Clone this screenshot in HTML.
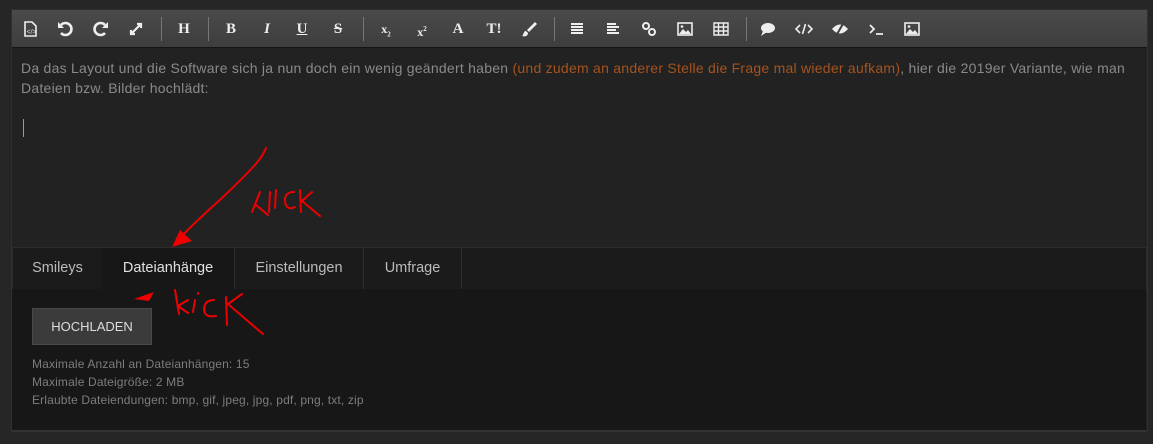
<!DOCTYPE html>
<html><head><meta charset="utf-8"><style>
body{margin:0;width:1153px;height:444px;background:#262626;font-family:"Liberation Sans",sans-serif;position:relative;overflow:hidden}
.frame{position:absolute;left:11px;top:9px;width:1135px;height:420px;background:#222;border:1px solid #303030}
.tb{position:absolute;left:0;top:0;width:1135px;height:37px;background:linear-gradient(#4a4a4a,#3e3e3e);border-bottom:1px solid #151515}
.ic{position:absolute;top:9px;width:20px;height:20px;color:#eee;font-size:15px;font-weight:bold;text-align:center;line-height:20px;font-family:"Liberation Serif",serif}
.sep{position:absolute;top:7px;width:1px;height:24px;background:#777}
.txt{position:absolute;left:9px;top:48px;font-size:14px;letter-spacing:0.25px;line-height:20px;color:#8a8a8a;width:1115px}
.or{color:#a6531d}
.tabs{position:absolute;left:0;top:237px;width:1133px;height:41px;background:#1b1b1b;border:1px solid #2c2c2c;border-bottom:1px solid #2c2c2c}
.tab{position:absolute;top:0;height:41px;line-height:41px;text-align:center;font-size:14.5px;color:#bbb;border-right:1px solid #2e2e2e}
.panel{position:absolute;left:0;top:279px;width:1134px;height:141px;background:#171717;border-bottom:2px solid #333}
.btn{position:absolute;left:20px;top:19px;width:120px;height:37px;background:#3b3b3b;border:1px solid #4a4a4a;box-sizing:border-box;color:#ddd;font-size:13px;line-height:35px;text-align:center}
.info{position:absolute;left:20px;top:66px;font-size:12px;letter-spacing:0.15px;line-height:18px;color:#7d7d7d}
</style></head><body>
<div class="frame">
<div class="tb">
<svg class="ic" style="left:8px" viewBox="0 0 20 20"><path d="M5 3h7l4 4v10H5z" fill="none" stroke="#eee" stroke-width="1.6"/><text x="6.5" y="15" font-size="7" fill="#eee">&lt;/&gt;</text></svg>
<svg class="ic" style="left:43px" viewBox="0 0 20 20"><path d="M6 6a6 6 0 1 1 0 8" fill="none" stroke="#eee" stroke-width="2.6"/><path d="M3 3v6h6z" fill="#eee"/></svg>
<svg class="ic" style="left:79px" viewBox="0 0 20 20"><path d="M14 6a6 6 0 1 0 0 8" fill="none" stroke="#eee" stroke-width="2.6"/><path d="M17 3v6h-6z" fill="#eee"/></svg>
<svg class="ic" style="left:114px" viewBox="0 0 20 20"><path d="M5 15l10-10M11 5h4v4M5 11v4h4" fill="none" stroke="#eee" stroke-width="2.2"/></svg>
<div class="sep" style="left:149px"></div>
<div class="ic" style="left:162px">H</div>
<div class="sep" style="left:196px"></div>
<div class="ic" style="left:209px">B</div>
<div class="ic" style="left:245px;font-style:italic">I</div>
<div class="ic" style="left:280px;text-decoration:underline">U</div>
<div class="ic" style="left:316px;text-decoration:line-through">S</div>
<div class="sep" style="left:351px"></div>
<div class="ic" style="left:364px;font-size:12px">x<sub style="font-size:7px">2</sub></div>
<div class="ic" style="left:400px;font-size:12px">x<sup style="font-size:7px">2</sup></div>
<div class="ic" style="left:436px">A</div>
<div class="ic" style="left:472px">T!</div>
<svg class="ic" style="left:507px" viewBox="0 0 20 20"><path d="M16 3l2 2-8 8-2-2z M7 12l2 2c0 3-3 4-6 3 2-1 1-5 4-5z" fill="#eee"/></svg>
<div class="sep" style="left:542px"></div>
<svg class="ic" style="left:555px" viewBox="0 0 20 20"><path d="M4 5h12M4 8h12M4 11h12M4 14h12" stroke="#eee" stroke-width="2"/></svg>
<svg class="ic" style="left:591px" viewBox="0 0 20 20"><path d="M4 5h9M4 8h12M4 11h9M4 14h12" stroke="#eee" stroke-width="2"/></svg>
<svg class="ic" style="left:627px" viewBox="0 0 20 20"><circle cx="7" cy="7" r="3" fill="none" stroke="#eee" stroke-width="2"/><circle cx="13" cy="13" r="3" fill="none" stroke="#eee" stroke-width="2"/></svg>
<svg class="ic" style="left:663px" viewBox="0 0 20 20"><rect x="3" y="4" width="14" height="12" fill="none" stroke="#eee" stroke-width="1.6"/><path d="M4 15l4-5 3 3 2-2 3 4z" fill="#eee"/><circle cx="7" cy="7.5" r="1.3" fill="#eee"/></svg>
<svg class="ic" style="left:699px" viewBox="0 0 20 20"><path d="M3 4h14v12H3zM3 8h14M3 12h14M7.5 4v12M12.5 4v12" fill="none" stroke="#eee" stroke-width="1.4"/></svg>
<div class="sep" style="left:734px"></div>
<svg class="ic" style="left:746px" viewBox="0 0 20 20"><ellipse cx="10" cy="9" rx="7" ry="5" fill="#eee"/><path d="M5 12l-2 5 6-4z" fill="#eee"/></svg>
<svg class="ic" style="left:782px" viewBox="0 0 20 20"><path d="M6 6l-4 4 4 4M14 6l4 4-4 4M11.5 5l-3 10" fill="none" stroke="#eee" stroke-width="1.6"/></svg>
<svg class="ic" style="left:818px" viewBox="0 0 20 20"><path d="M2 10q8-9 16 0q-8 9-16 0z" fill="#eee"/><path d="M14 3L6 17" stroke="#3f3f3f" stroke-width="2"/></svg>
<svg class="ic" style="left:854px" viewBox="0 0 20 20"><path d="M4 6l4 4-4 4M10 15h7" fill="none" stroke="#eee" stroke-width="1.8"/></svg>
<svg class="ic" style="left:890px" viewBox="0 0 20 20"><rect x="3" y="4" width="14" height="12" fill="none" stroke="#eee" stroke-width="1.6"/><path d="M4 15l4-5 3 3 2-2 3 4z" fill="#eee"/><circle cx="7" cy="7.5" r="1.3" fill="#eee"/></svg>
</div>
<div class="txt">Da das Layout und die Software sich ja nun doch ein wenig geändert haben <span class="or">(und zudem an anderer Stelle die Frage mal wieder aufkam)</span>, hier die 2019er Variante, wie man Dateien bzw. Bilder hochlädt:</div>
<div style="position:absolute;left:11px;top:109px;width:1px;height:18px;background:#999"></div>
<div class="tabs">
<div class="tab" style="left:0;width:89px">Smileys</div>
<div class="tab" style="left:89px;width:132px;background:#171717;color:#e0e0e0;height:42px">Dateianhänge</div>
<div class="tab" style="left:222px;width:128px">Einstellungen</div>
<div class="tab" style="left:351px;width:97px">Umfrage</div>
</div>
<div class="panel">
<div class="btn">HOCHLADEN</div>
<div class="info">Maximale Anzahl an Dateianhängen: 15<br>Maximale Dateigröße: 2 MB<br>Erlaubte Dateiendungen: bmp, gif, jpeg, jpg, pdf, png, txt, zip</div>
</div>
</div>
<svg style="position:absolute;left:0;top:0" width="1153" height="444" viewBox="0 0 1153 444">
<g fill="none" stroke="#e00" stroke-width="2" stroke-linecap="round">
<path d="M266 148q-3 8-12 18t-32 32q-25 22-46 44"/>
<path d="M252 212l8-20M256 205l12 10M270 192l-1 20M276 190l-1 18M294 192q-10 0-9 10 2 9 10 5M300 190l1 22M312 192l-10 9 18 15"/>
<path d="M175 290l4 24M188 300l-10 6 10 7M195 300l-2 12M198 293v1M214 300q-10 0-10 10 1 8 12 6M226 297l1 28M242 294l-14 10 35 30"/>
</g>
<path d="M180 230l-8 17 20-6z" fill="#e00"/>
<path d="M134 299l20-7-5 9z" fill="#e00"/>
</svg>
</body></html>
